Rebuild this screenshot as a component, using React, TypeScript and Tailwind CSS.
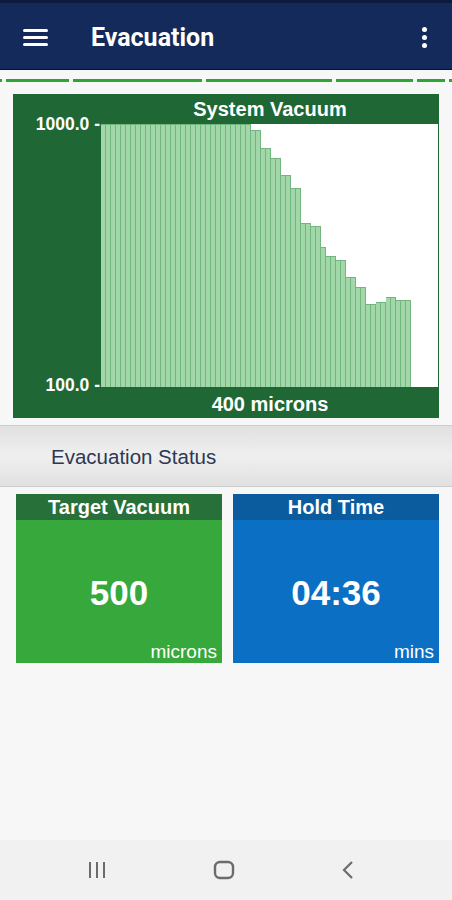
import { ReactNode } from "react"

// top y of every bar, read off the plot (plot spans y 124..387)
const BAR_TOPS = [
	...Array(30).fill(124),
	130, 130, 148, 148, 158, 158, 175, 175, 188, 188,
	223, 223, 226, 226, 247, 256, 256, 260, 260, 277,
	277, 287, 287, 304, 304, 302, 302, 297, 297, 300,
	300, 300
]
const PLOT_BOTTOM = 387

const DASHES = [2, 63, 129, 127, 77, 28, 3]

const sans = "font-['Liberation_Sans',Arial,sans-serif]"

const Header = () => (
	<div className="flex flex-col bg-[#142a5b]">
		<div className="h-[3px] bg-[#0b1a3d]" />
		<div className="flex h-[66px] items-center pt-[3px]">
			<div className="ml-[23px] flex w-[25px] flex-col gap-[4px]">
				<div className="h-[3px] rounded-sm bg-white" />
				<div className="h-[3px] rounded-sm bg-white" />
				<div className="h-[3px] rounded-sm bg-white" />
			</div>
			<div className="ml-[43px] font-['Roboto',sans-serif] text-[25px] font-bold text-white">Evacuation</div>
			<div className="ml-auto mr-[25px] flex flex-col gap-[3px]">
				<div className="h-[5px] w-[5px] rounded-full bg-white" />
				<div className="h-[5px] w-[5px] rounded-full bg-white" />
				<div className="h-[5px] w-[5px] rounded-full bg-white" />
			</div>
		</div>
		<div className="h-[1px] bg-[#07112c]" />
	</div>
)

const DashedLine = () => (
	<div className="mt-[9px] flex h-[3px] gap-[4px]">
		{DASHES.map((w, i) => (
			<div key={i} className="h-full bg-[#2da532]" style={{ width: w }} />
		))}
	</div>
)

const Chart = () => (
	<div className={`mx-[13px] mt-[12px] grid grid-cols-[88px_1fr] grid-rows-[30px_263px_31px] bg-[#1f6835] ${sans} font-bold text-white`}>
		<div />
		<div className="flex items-center justify-center text-[20px]">System Vacuum</div>
		<div className="flex flex-col items-end justify-between pr-[1px] text-[17.5px] leading-none">
			<div className="-mt-[8px]">1000.0 -</div>
			<div className="-mb-[7px]">100.0 -</div>
		</div>
		<div className="mr-[1px] flex items-end bg-white">
			{BAR_TOPS.map((top, i) => (
				<div
					key={i}
					className="w-[5px] border-r border-t border-[#72b57e] bg-[#a2d7aa]"
					style={{ height: PLOT_BOTTOM - top }}
				/>
			))}
		</div>
		<div />
		<div className="flex items-center justify-center pt-[2px] text-[20px]">400 microns</div>
	</div>
)

const StatusBar = () => (
	<div className="mt-[7px] flex h-[62px] items-center border-y border-[#cdcdcd] bg-gradient-to-b from-[#e0e0e0] via-[#efefef] to-[#e1e1e1] pl-[51px] pt-[3px]">
		<span className={`${sans} text-[20.5px] text-[#2c3853]`}>Evacuation Status</span>
	</div>
)

type TileProps = {
	title: string,
	value: string,
	unit: string,
	head: string,
	body: string
}

const Tile = (props: TileProps) => (
	<div className={`flex h-[169px] flex-1 flex-col ${sans} text-white ${props.body}`}>
		<div className={`flex h-[26px] items-center justify-center text-[20px] font-bold ${props.head}`}>{props.title}</div>
		<div className="flex flex-1 items-center justify-center pt-[24px] text-[35px] font-bold">{props.value}</div>
		<div className="self-end pr-[5px] pb-[2px] text-[19px] leading-none">{props.unit}</div>
	</div>
)

const NavBar = ({ children }: { children?: ReactNode }) => (
	<div className="mt-auto flex h-[60px] items-center gap-[106px] bg-[#f1f1f1] pl-[87px]">
		{children}
	</div>
)

const App = () => {
	return (
		<div className="flex h-[900px] w-[452px] flex-col overflow-hidden bg-[#f7f7f7]">
			<Header />
			<DashedLine />
			<Chart />
			<StatusBar />
			<div className="ml-[16px] mr-[13px] mt-[7px] flex gap-[11px]">
				<Tile title="Target Vacuum" value="500" unit="microns" head="bg-[#28703a]" body="bg-[#37a83b]" />
				<Tile title="Hold Time" value="04:36" unit="mins" head="bg-[#0b5b9f]" body="bg-[#0b6fc3]" />
			</div>
			<NavBar>
				<svg width="20" height="18" viewBox="0 0 20 18" fill="none" stroke="#6b6b6b" strokeWidth="2">
					<path d="M3 1v16M10 1v16M17 1v16" />
				</svg>
				<svg width="22" height="20" viewBox="0 0 22 20" fill="none" stroke="#6b6b6b" strokeWidth="2.4">
					<rect x="2" y="2" width="18" height="16" rx="5" />
				</svg>
				<svg width="14" height="20" viewBox="0 0 14 20" fill="none" stroke="#6b6b6b" strokeWidth="2.2">
					<path d="M11 2 3 10l8 8" />
				</svg>
			</NavBar>
		</div>
	)
}

export default App
